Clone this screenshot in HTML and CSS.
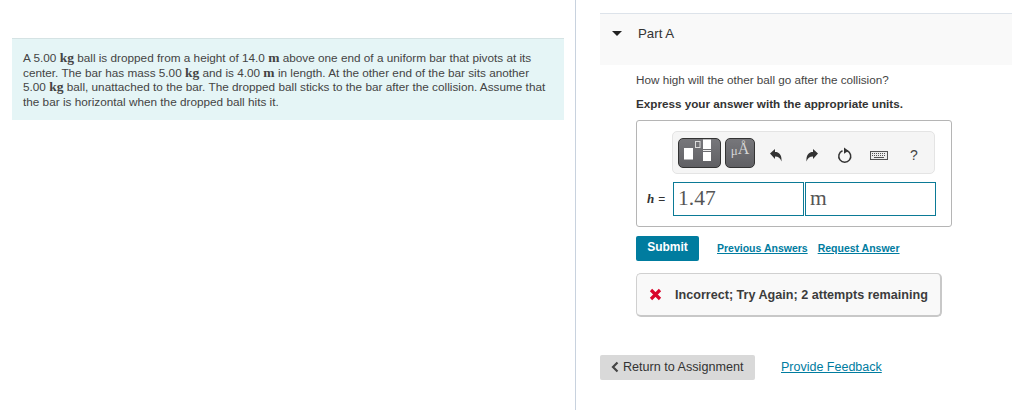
FILE: index.html
```html
<!DOCTYPE html>
<html lang="en">
  <head>
    <meta charset="UTF-8" />
    <title>Part A</title>
    <link rel="stylesheet" href="styles.css">
  </head>
  <body>
    <div class="page">
      <div class="left">
        <div class="intro">
          A 5.00 <span class="unit">kg</span> ball is dropped from a height of 14.0 <span class="unit">m</span> above one end of a uniform bar that pivots at its<br>
          center. The bar has mass 5.00 <span class="unit">kg</span> and is 4.00 <span class="unit">m</span> in length. At the other end of the bar sits another<br>
          5.00 <span class="unit">kg</span> ball, unattached to the bar. The dropped ball sticks to the bar after the collision. Assume that<br>
          the bar is horizontal when the dropped ball hits it.
        </div>
      </div>

      <div class="right">
        <div class="part-head">
          <span class="caret"></span>
          <span class="part-title">Part A</span>
        </div>

        <div class="part-body">
          <p class="question">How high will the other ball go after the collision?</p>
          <p class="express">Express your answer with the appropriate units.</p>

          <div class="answer-box">
            <div class="toolbar">
              <span class="tool tool-wide">
                <svg width="41" height="28" viewBox="0 0 41 28">
                  <rect x="5" y="9" width="9" height="11.500" fill="#fff"/>
                  <rect x="16.500" y="2.500" width="4.500" height="6" fill="none" stroke="#ddd"/>
                  <rect x="24" y="0.500" width="8" height="9.500" fill="#fff"/>
                  <rect x="24" y="11" width="8" height="1" fill="#eee"/>
                  <rect x="24" y="13" width="8" height="9" fill="#fff"/>
                </svg>
              </span>
              <span class="tool tool-unit"><span class="mu">μ</span>Å</span>
              <svg class="icon icon-undo" width="14" height="14" viewBox="0 0 14 14">
                <path d="M1 5.500 6 1v3c4 0 7 2.500 6.500 9.500-1.200-3.500-3-5-6.500-5V11z" fill="#333"/>
              </svg>
              <svg class="icon icon-redo" width="14" height="14" viewBox="0 0 14 14">
                <path d="M13 5.500 8 1v3c-4 0-7 2.500-6.500 9.500 1.200-3.500 3-5 6.500-5V11z" fill="#333"/>
              </svg>
              <svg class="icon icon-reset" width="16" height="17" viewBox="0 0 16 17">
                <path d="M10 3.700a6 6 0 1 1-4.500 0" fill="none" stroke="#333" stroke-width="1.500"/>
                <path d="M7 0.500 11.500 3.700 7 6.800z" fill="#333"/>
              </svg>
              <svg class="icon icon-keys" width="18" height="9" viewBox="0 0 18 9">
                <rect x="0.500" y="0.500" width="17" height="8" fill="#eee" stroke="#555"/>
                <path d="M2 2.500h14M2 4.500h14" stroke="#555" stroke-dasharray="1 1"/>
                <path d="M4 6.500h10" stroke="#555"/>
              </svg>
              <span class="help">?</span>
            </div>

            <div class="answer-row">
              <span class="label"><i>h</i><span class="equals">=</span></span>
              <span class="field">1.47</span>
              <span class="field field-unit">m</span>
            </div>
          </div>

          <div class="actions">
            <span class="submit">Submit</span>
            <a class="action-link" href="#">Previous Answers</a>
            <a class="action-link" href="#">Request Answer</a>
          </div>

          <div class="feedback">
            <svg class="cross" width="13" height="13" viewBox="0 0 13 13">
              <path d="M2 2 11 11M11 2 2 11" stroke="#d9042b" stroke-width="3.200"/>
            </svg>
            <span class="feedback-text">Incorrect; Try Again; 2 attempts remaining</span>
          </div>
        </div>

        <div class="footer">
          <span class="return">
            <svg width="8" height="12" viewBox="0 0 8 12">
              <path d="M6.500 1.500 2 6l4.500 4.500" fill="none" stroke="#444" stroke-width="2.200"/>
            </svg>
            Return to Assignment
          </span>
          <a class="feedback-link" href="#">Provide Feedback</a>
        </div>
      </div>
    </div>
  </body>
</html>
```

FILE: styles.css
```css
html,
body {
  margin: 0;
  height: 100%;
  background: #fff;
}
body {
  font-family: "Liberation Sans", Arial, sans-serif;
  color: #333;
  overflow: hidden;
}
.page {
  display: flex;
  height: 410px;
}
.left {
  box-sizing: border-box;
  padding: 38px 11px 0 12px;
  border-right: 1px solid #c8d2de;
  flex: none;
  width: 576px;
}
.intro {
  background: #e5f5f6;
  border-top: 1px solid #d5e3e4;
  padding: 12px 10px 11px 11px;
  font-size: 11.770px;
  line-height: 14.500px;
  color: #444;
  white-space: nowrap;
}
.unit {
  font-family: "Liberation Serif", serif;
  font-weight: bold;
  font-size: 13.500px;
}
.right {
  flex: 1;
  padding: 13px 0 0 24px;
}
.part-head {
  display: flex;
  align-items: flex-start;
  height: 51px;
  background: #f9f9f9;
  border-top: 1px solid #dde3ea;
}
.caret {
  width: 0;
  height: 0;
  margin: 17px 0 0 12px;
  border-left: 5px solid transparent;
  border-right: 5px solid transparent;
  border-top: 5px solid #222;
}
.part-title {
  margin: 12px 0 0 16px;
  font-size: 13.300px;
  line-height: 16px;
  color: #333;
}
.part-body {
  padding-left: 36px;
}
.question {
  margin: 7px 0 0;
  font-size: 11.700px;
  line-height: 15px;
  color: #444;
}
.express {
  margin: 9px 0 0;
  font-size: 11.700px;
  font-weight: bold;
  line-height: 15px;
  color: #333;
}
.answer-box {
  box-sizing: border-box;
  width: 316px;
  height: 107px;
  margin-top: 9px;
  padding: 10px 15px 0 35px;
  border: 1px solid #b5b5b5;
  border-radius: 3px;
}
.toolbar {
  display: flex;
  align-items: center;
  box-sizing: border-box;
  width: 263px;
  height: 43px;
  padding-left: 5px;
  background: #f5f5f5;
  border: 1px solid #e4e4e4;
  border-radius: 5px;
}
.tool {
  display: flex;
  align-items: center;
  justify-content: center;
  box-sizing: border-box;
  height: 30px;
  background: linear-gradient(#77777b, #606064);
  border: 1px solid #333;
  border-radius: 5px;
}
.tool-wide {
  width: 43px;
}
.tool-unit {
  align-items: flex-start;
  width: 30px;
  margin-left: 4px;
  padding-top: 1px;
  font-family: "Liberation Serif", serif;
  font-size: 16px;
  line-height: 18px;
  color: #d5d5d5;
}
.mu {
  margin-top: 2px;
  font-size: 13px;
}
.icon {
  flex: none;
  margin-top: 5px;
}
.icon-undo {
  margin-left: 14px;
}
.icon-redo {
  margin-left: 22px;
}
.icon-reset {
  margin-left: 18px;
}
.icon-keys {
  margin-left: 17px;
}
.help {
  margin: 5px 0 0 22px;
  font-size: 14px;
  color: #444;
}
.answer-row {
  display: flex;
  align-items: center;
  margin-top: 8px;
  margin-left: -25px;
}
.label {
  flex: none;
  width: 26px;
  font-family: "Liberation Serif", serif;
  font-size: 13px;
  white-space: nowrap;
}
.label i {
  font-weight: bold;
}
.equals {
  margin-left: 4px;
  font-family: "Liberation Sans", sans-serif;
  font-size: 12px;
}
.field {
  box-sizing: border-box;
  width: 131px;
  height: 34px;
  padding-left: 4px;
  border: 1px solid #0b7a96;
  font-family: "Liberation Serif", serif;
  font-size: 21.500px;
  line-height: 31px;
  color: #555;
}
.field-unit {
  margin-left: 1px;
}
.actions {
  display: flex;
  align-items: center;
  margin-top: 9px;
}
.submit {
  box-sizing: border-box;
  width: 63px;
  height: 25px;
  background: #007c9f;
  border-radius: 2px;
  color: #fff;
  font-size: 12px;
  font-weight: bold;
  line-height: 22px;
  text-align: center;
}
.action-link {
  margin-left: 10px;
  margin-bottom: 2px;
  font-size: 10.500px;
  font-weight: bold;
  color: #007c9f;
}
.submit + .action-link {
  margin-left: 18px;
}
.feedback {
  display: flex;
  align-items: center;
  box-sizing: border-box;
  width: 306px;
  height: 44px;
  margin-top: 12px;
  padding-left: 12px;
  background: #f9f9f9;
  border: 1px solid #d0d0d0;
  border-bottom: 2px solid #c8c8c8;
  border-right: 2px solid #c8c8c8;
  border-radius: 5px;
}
.feedback-text {
  margin-left: 13px;
  font-size: 12.600px;
  font-weight: bold;
  color: #3c3c3c;
  white-space: nowrap;
}
.footer {
  display: flex;
  align-items: center;
  margin-top: 38px;
}
.return {
  display: flex;
  align-items: center;
  gap: 4px;
  box-sizing: border-box;
  width: 155px;
  height: 25px;
  padding: 0 0 2px 11px;
  background: #d9d9d9;
  border-radius: 2px;
  font-size: 12.600px;
  color: #333;
  white-space: nowrap;
}
.feedback-link {
  margin: 0 0 2px 26px;
  font-size: 12.500px;
  color: #007c9f;
}
```
